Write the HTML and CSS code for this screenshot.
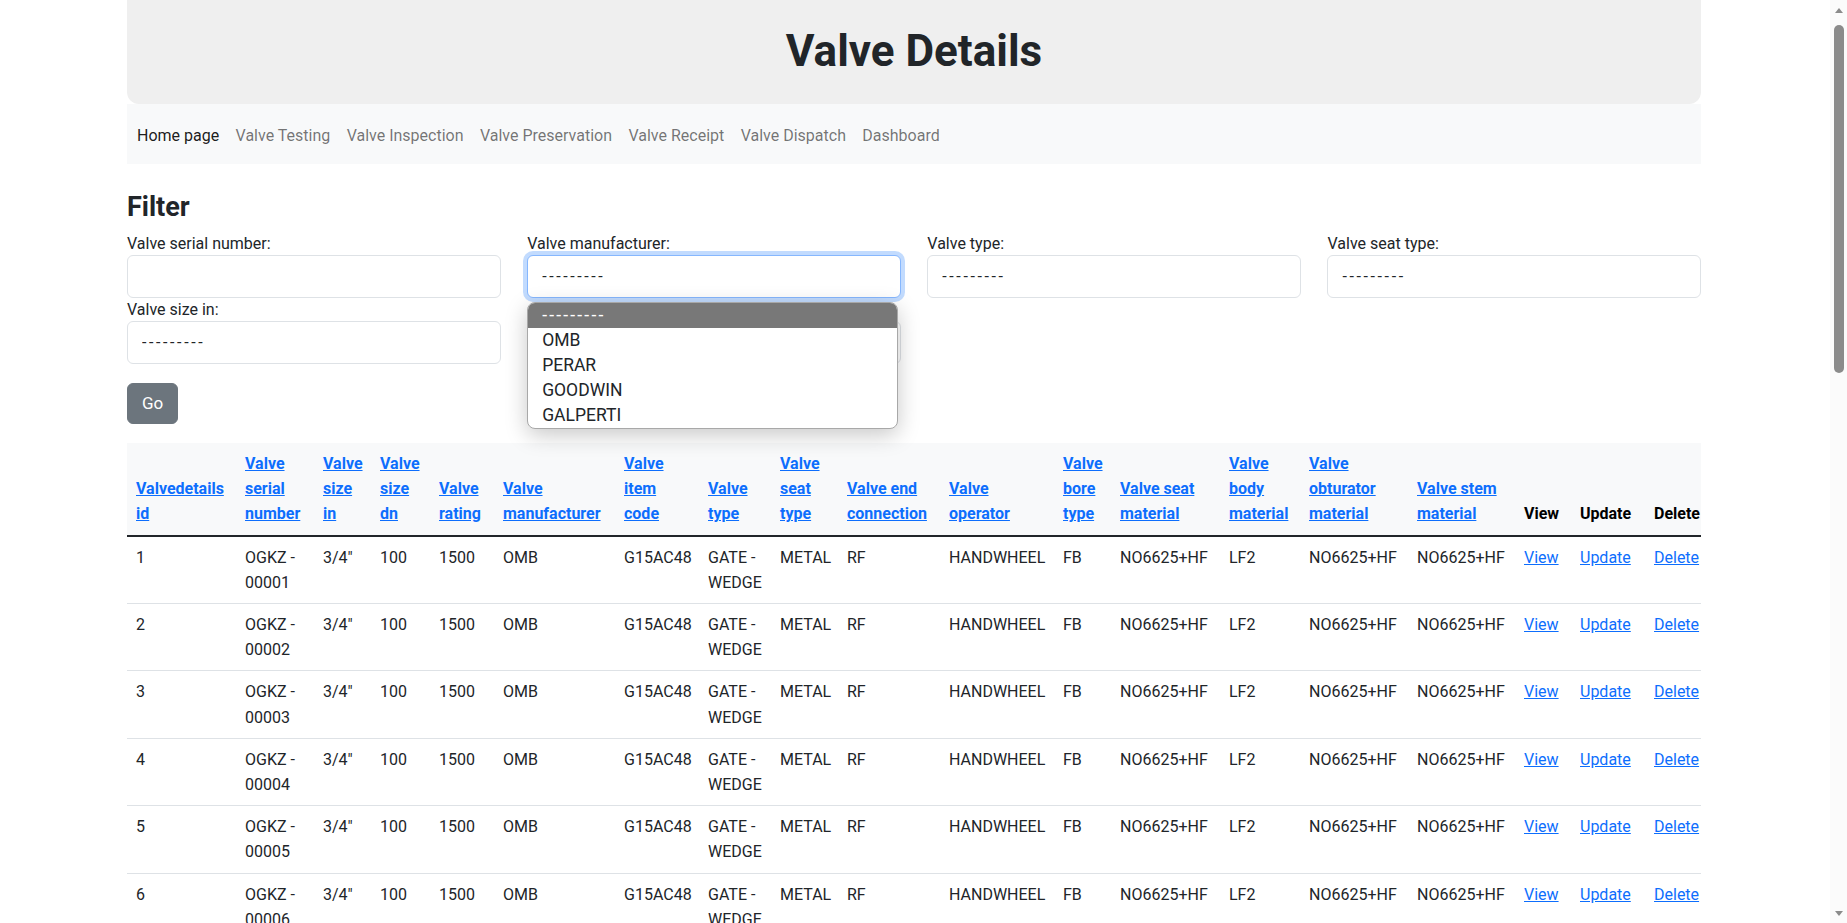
FILE: index.html
```html
<!DOCTYPE html>
<html lang="en">
<head>
<meta charset="utf-8">
<title>Valve Details</title>
<link rel="stylesheet" href="styles.css">
</head>
<body>
<div class="page">
  <header class="hero"><h1>Valve Details</h1></header>
  <nav class="topnav">
    <a class="active" href="#">Home page</a>
    <a href="#">Valve Testing</a>
    <a href="#">Valve Inspection</a>
    <a href="#">Valve Preservation</a>
    <a href="#">Valve Receipt</a>
    <a href="#">Valve Dispatch</a>
    <a href="#">Dashboard</a>
  </nav>

  <section class="filter">
    <h2>Filter</h2>
    <form class="filter-grid">
      <div class="field"><label>Valve serial number:</label><input class="control" type="text"></div>
      <div class="field"><label>Valve manufacturer:</label>
        <div class="select-wrap">
          <select class="control focus"><option>---------</option></select>
          <ul class="dropdown">
            <li class="sel"><span class="dash">---------</span></li>
            <li>OMB</li>
            <li>PERAR</li>
            <li>GOODWIN</li>
            <li>GALPERTI</li>
          </ul>
        </div>
      </div>
      <div class="field"><label>Valve type:</label><select class="control"><option>---------</option></select></div>
      <div class="field"><label>Valve seat type:</label><select class="control"><option>---------</option></select></div>
      <div class="field"><label>Valve size in:</label><select class="control"><option>---------</option></select></div>
      <div class="field"><label>&nbsp;</label><select class="control"><option>---------</option></select></div>
    </form>
    <button class="btn-go" type="button">Go</button>
  </section>

  <div class="table-wrap">
    <table class="grid">
      <colgroup>
        <col class="c1"><col class="c2"><col class="c3"><col class="c4"><col class="c5"><col class="c6"><col class="c7"><col class="c8"><col class="c9"><col class="c10"><col class="c11"><col class="c12"><col class="c13"><col class="c14"><col class="c15"><col class="c16"><col class="c17"><col class="c18"><col class="c19">
      </colgroup>
      <thead>
        <tr>
          <th><a href="#">Valvedetails id</a></th>
          <th><a href="#">Valve serial number</a></th>
          <th><a href="#">Valve size in</a></th>
          <th><a href="#">Valve size dn</a></th>
          <th><a href="#">Valve rating</a></th>
          <th><a href="#">Valve manufacturer</a></th>
          <th><a href="#">Valve item code</a></th>
          <th><a href="#">Valve type</a></th>
          <th><a href="#">Valve seat type</a></th>
          <th><a href="#">Valve end connection</a></th>
          <th><a href="#">Valve operator</a></th>
          <th><a href="#">Valve bore type</a></th>
          <th><a href="#">Valve seat material</a></th>
          <th><a href="#">Valve body material</a></th>
          <th><a href="#">Valve obturator material</a></th>
          <th><a href="#">Valve stem material</a></th>
          <th>View</th>
          <th>Update</th>
          <th>Delete</th>
        </tr>
      </thead>
      <tbody>
        <tr><td>1</td><td>OGKZ - 00001</td><td>3/4"</td><td>100</td><td>1500</td><td>OMB</td><td>G15AC48</td><td>GATE - WEDGE</td><td>METAL</td><td>RF</td><td>HANDWHEEL</td><td>FB</td><td>NO6625+HF</td><td>LF2</td><td>NO6625+HF</td><td>NO6625+HF</td><td><a href="#">View</a></td><td><a href="#">Update</a></td><td><a href="#">Delete</a></td></tr>
        <tr><td>2</td><td>OGKZ - 00002</td><td>3/4"</td><td>100</td><td>1500</td><td>OMB</td><td>G15AC48</td><td>GATE - WEDGE</td><td>METAL</td><td>RF</td><td>HANDWHEEL</td><td>FB</td><td>NO6625+HF</td><td>LF2</td><td>NO6625+HF</td><td>NO6625+HF</td><td><a href="#">View</a></td><td><a href="#">Update</a></td><td><a href="#">Delete</a></td></tr>
        <tr><td>3</td><td>OGKZ - 00003</td><td>3/4"</td><td>100</td><td>1500</td><td>OMB</td><td>G15AC48</td><td>GATE - WEDGE</td><td>METAL</td><td>RF</td><td>HANDWHEEL</td><td>FB</td><td>NO6625+HF</td><td>LF2</td><td>NO6625+HF</td><td>NO6625+HF</td><td><a href="#">View</a></td><td><a href="#">Update</a></td><td><a href="#">Delete</a></td></tr>
        <tr><td>4</td><td>OGKZ - 00004</td><td>3/4"</td><td>100</td><td>1500</td><td>OMB</td><td>G15AC48</td><td>GATE - WEDGE</td><td>METAL</td><td>RF</td><td>HANDWHEEL</td><td>FB</td><td>NO6625+HF</td><td>LF2</td><td>NO6625+HF</td><td>NO6625+HF</td><td><a href="#">View</a></td><td><a href="#">Update</a></td><td><a href="#">Delete</a></td></tr>
        <tr><td>5</td><td>OGKZ - 00005</td><td>3/4"</td><td>100</td><td>1500</td><td>OMB</td><td>G15AC48</td><td>GATE - WEDGE</td><td>METAL</td><td>RF</td><td>HANDWHEEL</td><td>FB</td><td>NO6625+HF</td><td>LF2</td><td>NO6625+HF</td><td>NO6625+HF</td><td><a href="#">View</a></td><td><a href="#">Update</a></td><td><a href="#">Delete</a></td></tr>
        <tr><td>6</td><td>OGKZ - 00006</td><td>3/4"</td><td>100</td><td>1500</td><td>OMB</td><td>G15AC48</td><td>GATE - WEDGE</td><td>METAL</td><td>RF</td><td>HANDWHEEL</td><td>FB</td><td>NO6625+HF</td><td>LF2</td><td>NO6625+HF</td><td>NO6625+HF</td><td><a href="#">View</a></td><td><a href="#">Update</a></td><td><a href="#">Delete</a></td></tr>
        <tr><td>7</td><td>OGKZ - 00007</td><td>3/4"</td><td>100</td><td>1500</td><td>OMB</td><td>G15AC48</td><td>GATE - WEDGE</td><td>METAL</td><td>RF</td><td>HANDWHEEL</td><td>FB</td><td>NO6625+HF</td><td>LF2</td><td>NO6625+HF</td><td>NO6625+HF</td><td><a href="#">View</a></td><td><a href="#">Update</a></td><td><a href="#">Delete</a></td></tr>
        <tr><td>8</td><td>OGKZ - 00008</td><td>3/4"</td><td>100</td><td>1500</td><td>OMB</td><td>G15AC48</td><td>GATE - WEDGE</td><td>METAL</td><td>RF</td><td>HANDWHEEL</td><td>FB</td><td>NO6625+HF</td><td>LF2</td><td>NO6625+HF</td><td>NO6625+HF</td><td><a href="#">View</a></td><td><a href="#">Update</a></td><td><a href="#">Delete</a></td></tr>
        <tr><td>9</td><td>OGKZ - 00009</td><td>3/4"</td><td>100</td><td>1500</td><td>OMB</td><td>G15AC48</td><td>GATE - WEDGE</td><td>METAL</td><td>RF</td><td>HANDWHEEL</td><td>FB</td><td>NO6625+HF</td><td>LF2</td><td>NO6625+HF</td><td>NO6625+HF</td><td><a href="#">View</a></td><td><a href="#">Update</a></td><td><a href="#">Delete</a></td></tr>
        <tr><td>10</td><td>OGKZ - 00010</td><td>3/4"</td><td>100</td><td>1500</td><td>OMB</td><td>G15AC48</td><td>GATE - WEDGE</td><td>METAL</td><td>RF</td><td>HANDWHEEL</td><td>FB</td><td>NO6625+HF</td><td>LF2</td><td>NO6625+HF</td><td>NO6625+HF</td><td><a href="#">View</a></td><td><a href="#">Update</a></td><td><a href="#">Delete</a></td></tr>
        <tr><td>11</td><td>OGKZ - 00011</td><td>3/4"</td><td>100</td><td>1500</td><td>OMB</td><td>G15AC48</td><td>GATE - WEDGE</td><td>METAL</td><td>RF</td><td>HANDWHEEL</td><td>FB</td><td>NO6625+HF</td><td>LF2</td><td>NO6625+HF</td><td>NO6625+HF</td><td><a href="#">View</a></td><td><a href="#">Update</a></td><td><a href="#">Delete</a></td></tr>
        <tr><td>12</td><td>OGKZ - 00012</td><td>3/4"</td><td>100</td><td>1500</td><td>OMB</td><td>G15AC48</td><td>GATE - WEDGE</td><td>METAL</td><td>RF</td><td>HANDWHEEL</td><td>FB</td><td>NO6625+HF</td><td>LF2</td><td>NO6625+HF</td><td>NO6625+HF</td><td><a href="#">View</a></td><td><a href="#">Update</a></td><td><a href="#">Delete</a></td></tr>
        <tr><td>13</td><td>OGKZ - 00013</td><td>3/4"</td><td>100</td><td>1500</td><td>OMB</td><td>G15AC48</td><td>GATE - WEDGE</td><td>METAL</td><td>RF</td><td>HANDWHEEL</td><td>FB</td><td>NO6625+HF</td><td>LF2</td><td>NO6625+HF</td><td>NO6625+HF</td><td><a href="#">View</a></td><td><a href="#">Update</a></td><td><a href="#">Delete</a></td></tr>
        <tr><td>14</td><td>OGKZ - 00014</td><td>3/4"</td><td>100</td><td>1500</td><td>OMB</td><td>G15AC48</td><td>GATE - WEDGE</td><td>METAL</td><td>RF</td><td>HANDWHEEL</td><td>FB</td><td>NO6625+HF</td><td>LF2</td><td>NO6625+HF</td><td>NO6625+HF</td><td><a href="#">View</a></td><td><a href="#">Update</a></td><td><a href="#">Delete</a></td></tr>
        <tr><td>15</td><td>OGKZ - 00015</td><td>3/4"</td><td>100</td><td>1500</td><td>OMB</td><td>G15AC48</td><td>GATE - WEDGE</td><td>METAL</td><td>RF</td><td>HANDWHEEL</td><td>FB</td><td>NO6625+HF</td><td>LF2</td><td>NO6625+HF</td><td>NO6625+HF</td><td><a href="#">View</a></td><td><a href="#">Update</a></td><td><a href="#">Delete</a></td></tr>
        <tr><td>16</td><td>OGKZ - 00016</td><td>3/4"</td><td>100</td><td>1500</td><td>OMB</td><td>G15AC48</td><td>GATE - WEDGE</td><td>METAL</td><td>RF</td><td>HANDWHEEL</td><td>FB</td><td>NO6625+HF</td><td>LF2</td><td>NO6625+HF</td><td>NO6625+HF</td><td><a href="#">View</a></td><td><a href="#">Update</a></td><td><a href="#">Delete</a></td></tr>
        <tr><td>17</td><td>OGKZ - 00017</td><td>3/4"</td><td>100</td><td>1500</td><td>OMB</td><td>G15AC48</td><td>GATE - WEDGE</td><td>METAL</td><td>RF</td><td>HANDWHEEL</td><td>FB</td><td>NO6625+HF</td><td>LF2</td><td>NO6625+HF</td><td>NO6625+HF</td><td><a href="#">View</a></td><td><a href="#">Update</a></td><td><a href="#">Delete</a></td></tr>
        <tr><td>18</td><td>OGKZ - 00018</td><td>3/4"</td><td>100</td><td>1500</td><td>OMB</td><td>G15AC48</td><td>GATE - WEDGE</td><td>METAL</td><td>RF</td><td>HANDWHEEL</td><td>FB</td><td>NO6625+HF</td><td>LF2</td><td>NO6625+HF</td><td>NO6625+HF</td><td><a href="#">View</a></td><td><a href="#">Update</a></td><td><a href="#">Delete</a></td></tr>
        <tr><td>19</td><td>OGKZ - 00019</td><td>3/4"</td><td>100</td><td>1500</td><td>OMB</td><td>G15AC48</td><td>GATE - WEDGE</td><td>METAL</td><td>RF</td><td>HANDWHEEL</td><td>FB</td><td>NO6625+HF</td><td>LF2</td><td>NO6625+HF</td><td>NO6625+HF</td><td><a href="#">View</a></td><td><a href="#">Update</a></td><td><a href="#">Delete</a></td></tr>
        <tr><td>20</td><td>OGKZ - 00020</td><td>3/4"</td><td>100</td><td>1500</td><td>OMB</td><td>G15AC48</td><td>GATE - WEDGE</td><td>METAL</td><td>RF</td><td>HANDWHEEL</td><td>FB</td><td>NO6625+HF</td><td>LF2</td><td>NO6625+HF</td><td>NO6625+HF</td><td><a href="#">View</a></td><td><a href="#">Update</a></td><td><a href="#">Delete</a></td></tr>
        <tr><td>21</td><td>OGKZ - 00021</td><td>3/4"</td><td>100</td><td>1500</td><td>OMB</td><td>G15AC48</td><td>GATE - WEDGE</td><td>METAL</td><td>RF</td><td>HANDWHEEL</td><td>FB</td><td>NO6625+HF</td><td>LF2</td><td>NO6625+HF</td><td>NO6625+HF</td><td><a href="#">View</a></td><td><a href="#">Update</a></td><td><a href="#">Delete</a></td></tr>
        <tr><td>22</td><td>OGKZ - 00022</td><td>3/4"</td><td>100</td><td>1500</td><td>OMB</td><td>G15AC48</td><td>GATE - WEDGE</td><td>METAL</td><td>RF</td><td>HANDWHEEL</td><td>FB</td><td>NO6625+HF</td><td>LF2</td><td>NO6625+HF</td><td>NO6625+HF</td><td><a href="#">View</a></td><td><a href="#">Update</a></td><td><a href="#">Delete</a></td></tr>
        <tr><td>23</td><td>OGKZ - 00023</td><td>3/4"</td><td>100</td><td>1500</td><td>OMB</td><td>G15AC48</td><td>GATE - WEDGE</td><td>METAL</td><td>RF</td><td>HANDWHEEL</td><td>FB</td><td>NO6625+HF</td><td>LF2</td><td>NO6625+HF</td><td>NO6625+HF</td><td><a href="#">View</a></td><td><a href="#">Update</a></td><td><a href="#">Delete</a></td></tr>
        <tr><td>24</td><td>OGKZ - 00024</td><td>3/4"</td><td>100</td><td>1500</td><td>OMB</td><td>G15AC48</td><td>GATE - WEDGE</td><td>METAL</td><td>RF</td><td>HANDWHEEL</td><td>FB</td><td>NO6625+HF</td><td>LF2</td><td>NO6625+HF</td><td>NO6625+HF</td><td><a href="#">View</a></td><td><a href="#">Update</a></td><td><a href="#">Delete</a></td></tr>
        <tr><td>25</td><td>OGKZ - 00025</td><td>3/4"</td><td>100</td><td>1500</td><td>OMB</td><td>G15AC48</td><td>GATE - WEDGE</td><td>METAL</td><td>RF</td><td>HANDWHEEL</td><td>FB</td><td>NO6625+HF</td><td>LF2</td><td>NO6625+HF</td><td>NO6625+HF</td><td><a href="#">View</a></td><td><a href="#">Update</a></td><td><a href="#">Delete</a></td></tr>
        <tr><td>26</td><td>OGKZ - 00026</td><td>3/4"</td><td>100</td><td>1500</td><td>OMB</td><td>G15AC48</td><td>GATE - WEDGE</td><td>METAL</td><td>RF</td><td>HANDWHEEL</td><td>FB</td><td>NO6625+HF</td><td>LF2</td><td>NO6625+HF</td><td>NO6625+HF</td><td><a href="#">View</a></td><td><a href="#">Update</a></td><td><a href="#">Delete</a></td></tr>
        <tr><td>27</td><td>OGKZ - 00027</td><td>3/4"</td><td>100</td><td>1500</td><td>OMB</td><td>G15AC48</td><td>GATE - WEDGE</td><td>METAL</td><td>RF</td><td>HANDWHEEL</td><td>FB</td><td>NO6625+HF</td><td>LF2</td><td>NO6625+HF</td><td>NO6625+HF</td><td><a href="#">View</a></td><td><a href="#">Update</a></td><td><a href="#">Delete</a></td></tr>
      </tbody>
    </table>
  </div>
</div>

<div class="vscroll" aria-hidden="true">
  <span class="arrow up"></span>
  <span class="thumb"></span>
  <span class="arrow down"></span>
</div>
</body>
</html>
```

FILE: styles.css
```css
html {
  background: #fff;
  scrollbar-width: none;
}
body {
  margin: 0;
  padding-right: 19px;
  font-family: Roboto, "Liberation Sans", Arial, sans-serif;
  font-size: 16px;
  line-height: 1.5;
  color: #212529;
  background: #fff;
}

.page {
  width: 1574px;
  margin: 0 auto;
}

/* fake window scrollbar (overlay) */
.vscroll {
  position: fixed;
  top: 0;
  right: 0;
  width: 17px;
  height: 100%;
  background: #fbfbfb;
  display: flex;
  flex-direction: column;
  align-items: center;
  z-index: 50;
}
.vscroll .arrow {
  width: 0;
  height: 0;
  border-left: 4.5px solid transparent;
  border-right: 4.5px solid transparent;
}
.vscroll .up {
  margin-top: 8px;
  border-bottom: 5px solid #8b8b8b;
}
.vscroll .thumb {
  width: 10px;
  height: 348px;
  margin-top: 12px;
  border-radius: 5px;
  background: #8b8b8b;
}
.vscroll .down {
  margin-top: auto;
  margin-bottom: 7px;
  border-top: 5px solid #8b8b8b;
}

/* header */
.hero {
  background: #efefef;
  border-radius: 0 0 12px 12px;
  height: 104px;
  box-sizing: border-box;
  padding-top: 27px;
  text-align: center;
}
.hero h1 {
  margin: 0;
  font-size: 44px;
  line-height: 48px;
  font-weight: 700;
  color: #212529;
}

/* nav */
.topnav {
  background: #f8f9fa;
  height: 60px;
  box-sizing: border-box;
  padding: 4px 10px 0;
  display: flex;
  align-items: center;
  gap: 16.4px;
}
.topnav a {
  color: rgba(0, 0, 0, .55);
  text-decoration: none;
  line-height: 24px;
}
.topnav a.active { color: rgba(0, 0, 0, .9); }

/* filter */
.filter h2 {
  margin: 27px 0 9px;
  font-size: 27px;
  line-height: 32px;
  font-weight: 700;
}
.filter-grid {
  display: grid;
  grid-template-columns: repeat(4, 1fr);
  column-gap: 26.67px;
  margin: 0;
}
.field label {
  display: block;
  line-height: 23px;
}
.control {
  display: block;
  width: 100%;
  height: 43px;
  box-sizing: border-box;
  border: 1px solid #dee2e6;
  border-radius: 6px;
  padding: 0 14px;
  font: inherit;
  letter-spacing: 2.6px;
  color: #212529;
  background: #fff;
  -webkit-appearance: none;
  appearance: none;
  outline: 0;
  margin: 0;
}
.control.focus {
  border-color: #86b7fe;
  box-shadow: 0 0 0 4px rgba(13, 110, 253, .25);
}
.select-wrap { position: relative; }
.dropdown {
  position: absolute;
  top: 47px;
  left: 0;
  width: 371px;
  box-sizing: border-box;
  margin: 0;
  padding: 0;
  list-style: none;
  background: #fff;
  border: 1px solid #a8a8a8;
  border-radius: 8px;
  box-shadow: 0 6px 22px rgba(0, 0, 0, .22);
  overflow: hidden;
  z-index: 10;
  font-size: 17.5px;
}
.dropdown li {
  height: 25px;
  line-height: 25px;
  padding-left: 14px;
  color: #212529;
}
.dropdown li.sel {
  background: #787878;
  color: #fff;
}
.dropdown .dash { letter-spacing: 2.2px; }

.btn-go {
  display: block;
  margin-top: 19px;
  background: #6c757d;
  color: #fff;
  border: 1px solid #6c757d;
  border-radius: 6px;
  font: inherit;
  font-size: 17px;
  line-height: 25px;
  padding: 7px 14px;
}

/* table */
.table-wrap {
  margin-top: 19px;
  width: 100%;
  overflow: hidden;
}
.grid {
  table-layout: fixed;
  width: 1588px;
  border-collapse: separate;
  border-spacing: 0;
}
.c1 { width: 109px; }
.c2 { width: 78px; }
.c3 { width: 57px; }
.c4 { width: 59px; }
.c5 { width: 64px; }
.c6 { width: 121px; }
.c7 { width: 84px; }
.c8 { width: 72px; }
.c9 { width: 67px; }
.c10 { width: 102px; }
.c11 { width: 114px; }
.c12 { width: 57px; }
.c13 { width: 109px; }
.c14 { width: 80px; }
.c15 { width: 108px; }
.c16 { width: 107px; }
.c17 { width: 56px; }
.c18 { width: 74px; }
.c19 { width: 70px; }

.grid th,
.grid td {
  padding: 8px 9px;
  line-height: 25.2px;
  text-align: left;
}
.grid thead th {
  background: #f8f9fa;
  vertical-align: bottom;
  font-weight: 700;
  color: #000;
  border-bottom: 2px solid #212529;
}
.grid thead th a {
  color: #0d6efd;
  text-decoration: underline;
}
.grid td {
  vertical-align: top;
  border-bottom: 1px solid #dee2e6;
  color: #212529;
}
.grid td a {
  color: #0d6efd;
  text-decoration: underline;
}
```
